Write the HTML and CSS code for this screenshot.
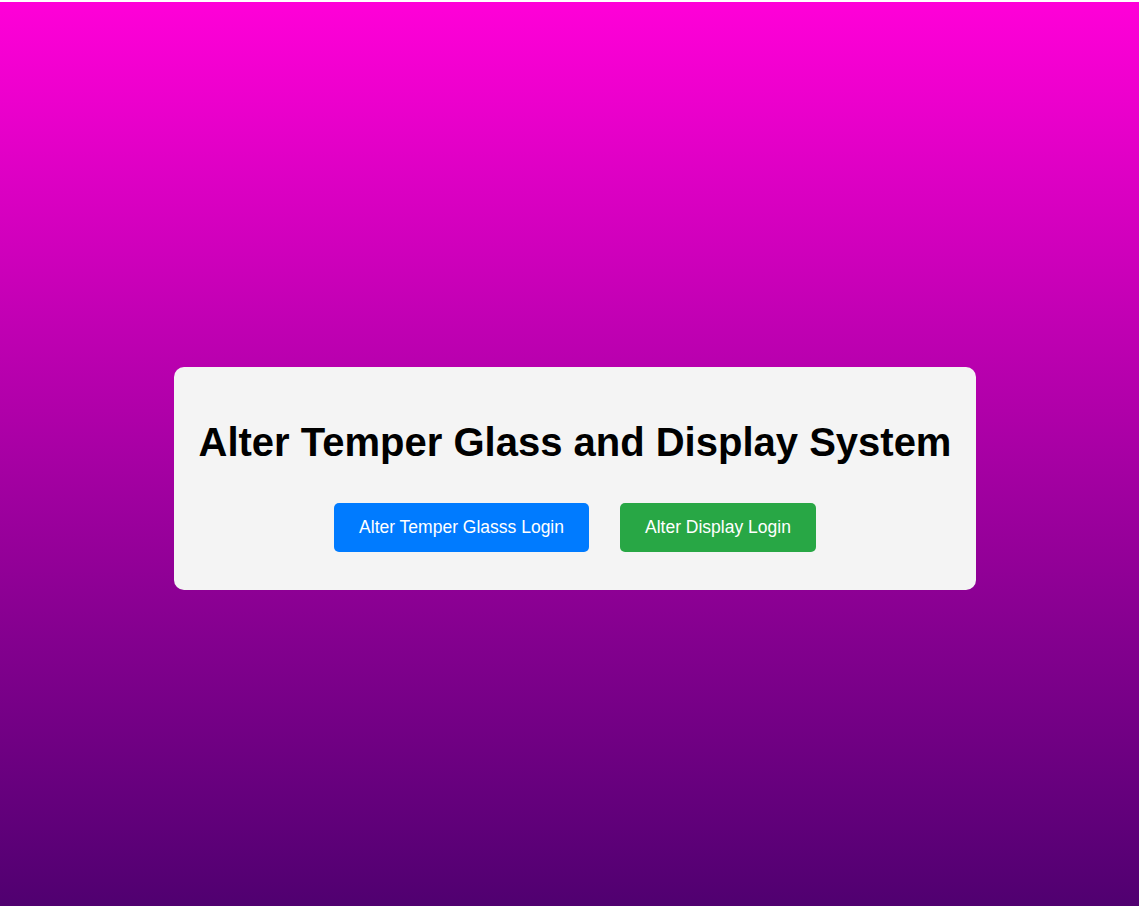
FILE: index.html
```html
<!DOCTYPE html>
<html>
<head>
<meta charset="utf-8">
<link rel="stylesheet" href="styles.css">
</head>
<body>
<div class="page">
  <div class="card">
    <h1 class="title">Alter Temper Glass and Display System</h1>
    <div class="actions">
      <a class="btn btn-blue" href="#">Alter Temper Glasss Login</a>
      <a class="btn btn-green" href="#">Alter Display Login</a>
    </div>
  </div>
</div>
</body>
</html>
```
FILE: styles.css
```css
html, body {
  margin: 0;
  padding: 0;
  background: #ffffff;
}
body {
  font-family: "Liberation Sans", Arial, sans-serif;
  padding-top: 2px;
  padding-right: 2px;
}
.page {
  height: 904px;
  background: linear-gradient(to bottom, #ff00d8, #500070);
  display: flex;
  justify-content: center;
  padding-top: 365px;
  padding-left: 11px;
  box-sizing: border-box;
}
.card {
  align-self: flex-start;
  width: 802px;
  height: 223px;
  box-sizing: border-box;
  background: #f4f4f4;
  border-radius: 10px;
  padding-top: 20px;
  text-align: center;
}
.title {
  margin: 0;
  font-size: 40px;
  line-height: 110px;
  font-weight: bold;
  color: #000;
}
.actions {
  display: flex;
  justify-content: center;
  gap: 31px;
  margin-top: 6px;
}
.btn {
  display: block;
  height: 49px;
  line-height: 49px;
  padding: 0 25px;
  border-radius: 5px;
  color: #fff;
  font-size: 17.5px;
  text-decoration: none;
}
.btn-blue { background: #007bff; }
.btn-green { background: #28a745; }
```
